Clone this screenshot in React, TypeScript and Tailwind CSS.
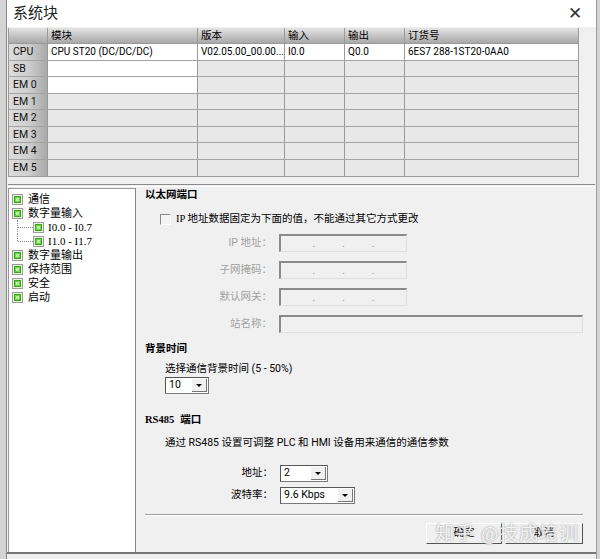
const ui = "font-['Roboto','Noto_Sans_CJK_SC',sans-serif]";

const rows = [
  { name: "CPU", cells: ["CPU ST20 (DC/DC/DC)", "V02.05.00_00.00...", "I0.0", "Q0.0", "6ES7 288-1ST20-0AA0"], white: 5 },
  { name: "SB", cells: ["", "", "", "", ""], white: 1 },
  { name: "EM 0", cells: ["", "", "", "", ""], white: 1 },
  { name: "EM 1", cells: ["", "", "", "", ""], white: 0 },
  { name: "EM 2", cells: ["", "", "", "", ""], white: 0 },
  { name: "EM 3", cells: ["", "", "", "", ""], white: 0 },
  { name: "EM 4", cells: ["", "", "", "", ""], white: 0 },
  { name: "EM 5", cells: ["", "", "", "", ""], white: 0 },
];

const widths = ["w-[150px]", "w-[87px]", "w-[60px]", "w-[60px]", "w-[173px]"];
const heads = ["模块", "版本", "输入", "输出", "订货号"];

function GreenBox() {
  return (
    <div className="w-[11px] h-[11px] border border-[#9a9a9a] bg-[#e8f8e0] p-[1px] shrink-0">
      <div className="w-full h-full bg-[#6fd24a] border border-[#3ea51f] flex items-center justify-center">
        <div className="w-[3px] h-[3px] bg-[#b8f0a0]" />
      </div>
    </div>
  );
}

function TreeItem({ label }: { label: string }) {
  return (
    <div className="flex items-center gap-[5px] h-[14px] pl-[3px]">
      <GreenBox />
      <span className="text-[11px] leading-none text-black">{label}</span>
    </div>
  );
}

function SubItem({ label, last }: { label: string; last?: boolean }) {
  return (
    <div className="flex items-center h-[14px] pl-[8px]">
      <div className={`border-l border-dotted border-[#888] ${last ? "h-[7px] self-start" : "h-[14px]"}`} />
      <div className="w-[15px] border-t border-dotted border-[#888]" />
      <GreenBox />
      <span className="ml-[4px] text-[11px] leading-none text-black font-['Liberation_Serif',serif]">{label}</span>
    </div>
  );
}

function IpBox() {
  return (
    <div className="w-[128px] h-[18px] border-t-2 border-l-2 border-[#8a8a8a] border-b border-r border-b-[#e0e0e0] border-r-[#e0e0e0] bg-[#f0f0f0] flex items-center justify-around px-[18px] text-[10px] text-[#999]">
      <span>.</span>
      <span>.</span>
      <span>.</span>
    </div>
  );
}

function Select({ value, w }: { value: string; w: string }) {
  return (
    <div className={`${w} h-[17px] bg-white border border-[#7a7a7a] border-t-[#555] border-l-[#555] flex items-center`}>
      <span className="flex-1 pl-[3px] text-[10.5px] leading-none text-black">{value}</span>
      <div className="w-[15px] h-[13px] mr-[1px] bg-[#f0f0f0] border-r border-b border-[#777] flex items-center justify-center">
        <div className="w-0 h-0 border-l-[3px] border-r-[3px] border-t-[3px] border-l-transparent border-r-transparent border-t-black" />
      </div>
    </div>
  );
}

export default function App() {
  return (
    <div className={`w-[600px] h-[559px] bg-[#d4d4d4] flex pl-[6px] pr-[6px] ${ui}`}>
      <div className="flex-1 flex flex-col bg-[#f0f0f0] border-l border-[#8a8a8a] border-r border-r-[#9a9a9a] relative">
        {/* title */}
        <div className="h-[27px] bg-white flex items-center justify-between pl-[6px] pr-[14px] shrink-0">
          <span className="text-[15px] text-[#222]">系统块</span>
          <span className="text-[17px] text-[#333] leading-none">✕</span>
        </div>

        {/* module table */}
        <div className="flex pl-[1px] pt-[1px] pr-[17px]">
          <div className="border border-[#9a9a9a] border-t-0 bg-[#e8e8e8]">
            <div className="flex h-[16px] bg-gradient-to-b from-[#e4e4e4] to-[#a8a8a8] border-b border-[#9a9a9a]">
              <div className="w-[39px] border-r border-[#9a9a9a]" />
              {heads.map((h, i) => (
                <div key={h} className={`${widths[i]} border-r border-[#9a9a9a] last:border-r-0 pl-[3px] text-[10.5px] leading-[15px] text-black`}>
                  {h}
                </div>
              ))}
            </div>
            {rows.map((r) => (
              <div key={r.name} className="flex h-[16.5px] border-b border-[#a4a4a4] last:border-b-0">
                <div className="w-[39px] border-r border-[#9a9a9a] bg-gradient-to-r from-[#dcdcdc] via-[#cfcfcf] to-[#a9a9a9] pl-[4px] text-[10.5px] leading-[16px] text-[#111]">
                  {r.name}
                </div>
                {r.cells.map((c, i) => (
                  <div
                    key={i}
                    className={`${widths[i]} border-r border-[#9a9a9a] last:border-r-0 pl-[3px] text-[10px] leading-[16px] text-black whitespace-nowrap overflow-hidden ${i < r.white ? "bg-white" : "bg-[#e8e8e8]"}`}
                  >
                    {c}
                  </div>
                ))}
              </div>
            ))}
          </div>
        </div>

        {/* splitter */}
        <div className="mt-[7px] h-[3px] border-t border-[#8a8a8a] border-b border-b-white mx-[1px]" />

        {/* lower area */}
        <div className="flex flex-1 min-h-0 border-b-2 border-[#777] mb-[5px]">
          <div className="w-[128px] ml-[1px] mt-[1px] bg-white border-t border-l border-[#9a9a9a] border-r border-r-[#888] pt-[3px] flex flex-col">
            <TreeItem label="通信" />
            <TreeItem label="数字量输入" />
            <SubItem label="I0.0 - I0.7" />
            <SubItem label="I1.0 - I1.7" last />
            <TreeItem label="数字量输出" />
            <TreeItem label="保持范围" />
            <TreeItem label="安全" />
            <TreeItem label="启动" />
          </div>

          <div className="flex-1 flex flex-col pl-[9px] pr-[13px] pt-[0px] text-[10.5px] text-black">
            <div className="font-bold leading-[16px]">以太网端口</div>

            <div className="flex items-center gap-[5px] mt-[9px] pl-[15px] h-[14px]">
              <div className="w-[11px] h-[11px] border-t border-l border-[#888] border-r border-b border-r-white border-b-white bg-[#f4f4f4]" />
              <span className="leading-none font-['Liberation_Serif','Noto_Sans_CJK_SC',serif]">IP 地址数据固定为下面的值，不能通过其它方式更改</span>
            </div>

            <div className="flex flex-col gap-[9px] mt-[8px] text-[#a0a0a0]">
              {["IP 地址：", "子网掩码：", "默认网关："].map((l) => (
                <div key={l} className="flex items-center h-[18px]">
                  <span className="w-[128px] text-right pr-[1px] leading-none">{l}</span>
                  <div className="ml-[6px]">
                    <IpBox />
                  </div>
                </div>
              ))}
              <div className="flex items-center h-[18px]">
                <span className="w-[128px] text-right pr-[1px] leading-none">站名称：</span>
                <div className="ml-[6px] flex-1 h-[18px] border-t-2 border-l-2 border-[#8a8a8a] border-b border-r border-b-[#e0e0e0] border-r-[#e0e0e0] bg-[#f0f0f0]" />
              </div>
            </div>

            <div className="font-bold leading-[16px] mt-[8px]">背景时间</div>
            <div className="pl-[20px] mt-[4px] leading-[16px]">选择通信背景时间 (5 - 50%)</div>
            <div className="pl-[20px] mt-[0px]">
              <Select value="10" w="w-[44px]" />
            </div>

            <div className="font-bold leading-[16px] mt-[18px] flex gap-[6px]">
              <span className="font-['Liberation_Serif',serif]">RS485</span>
              <span>端口</span>
            </div>
            <div className="pl-[20px] mt-[7px] leading-[16px]">通过 RS485 设置可调整 PLC 和 HMI 设备用来通信的通信参数</div>

            <div className="flex items-center mt-[14px] h-[17px]">
              <span className="w-[128px] text-right leading-none">地址：</span>
              <div className="ml-[7px]">
                <Select value="2" w="w-[48px]" />
              </div>
            </div>
            <div className="flex items-center mt-[5px] h-[17px]">
              <span className="w-[128px] text-right leading-none">波特率：</span>
              <div className="ml-[7px]">
                <Select value="9.6 Kbps" w="w-[75px]" />
              </div>
            </div>

            <div className="mt-[10px] border-t border-[#a0a0a0] border-b border-b-white" />

            <div className="flex justify-end gap-[3px] mt-[7px] relative">
              <div className="w-[76px] h-[21px] border border-[#555] border-t-white border-l-white bg-[#f0f0f0] flex items-center justify-center leading-none">
                确定
              </div>
              <div className="w-[78px] h-[21px] border border-[#555] border-t-white border-l-white bg-[#f0f0f0] flex items-center justify-center leading-none">
                取消
              </div>
              <div className="absolute right-[4px] top-[-1px] text-[19px] leading-[24px] text-white/85 tracking-[1px] [text-shadow:0_0_2px_#888]">
                知乎 @技成培训
              </div>
            </div>
          </div>
        </div>
      </div>
    </div>
  );
}
